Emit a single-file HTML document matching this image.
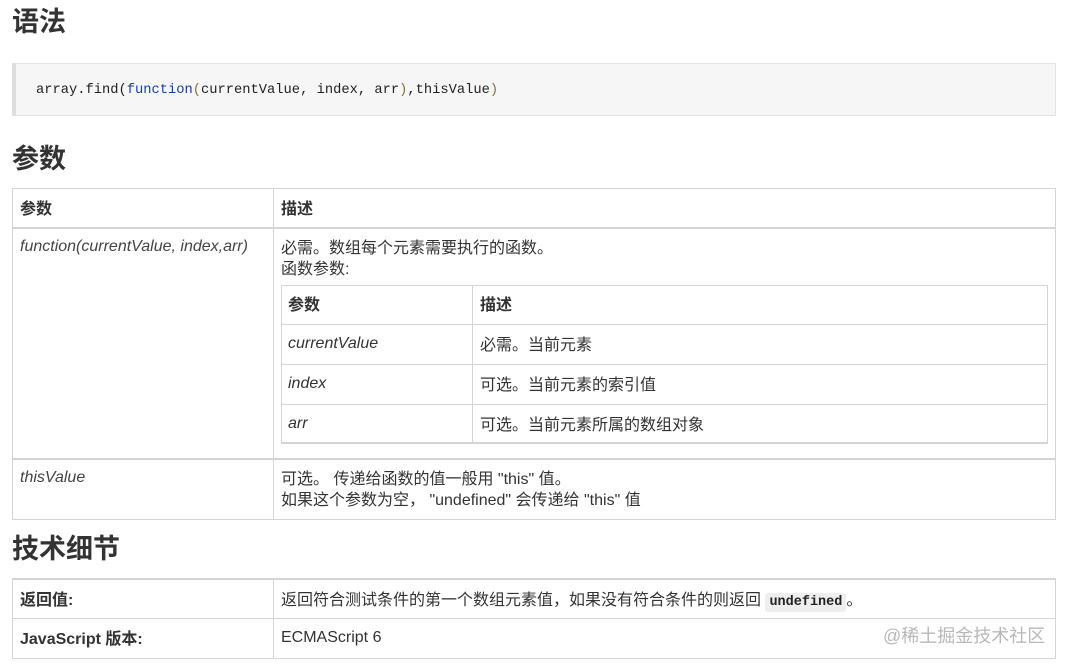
<!DOCTYPE html>
<html><head><meta charset="utf-8"><style>
*{margin:0;padding:0;box-sizing:border-box}
body{width:1067px;height:667px;background:#fff;position:relative;overflow:hidden;font-family:"Liberation Sans","Noto Sans CJK SC",sans-serif;color:#333;font-size:16px}
.a{position:absolute}
h2{position:absolute;left:12px;font-size:27px;font-weight:bold;color:#333;line-height:30px}
.b{position:absolute;border:1px solid #d4d4d4}
.hl{position:absolute;background:#d4d4d4}
.t{position:absolute;white-space:nowrap;line-height:21px}
i{font-style:italic}
b{font-weight:bold}
</style></head><body>
<h2 style="top:7px">语法</h2>
<div class="a" style="left:12px;top:63px;width:1044px;height:53px;background:#f6f6f6;border:1px solid #e4e4e4;border-left:4px solid #ddd"></div>
<div class="t" style="left:36px;top:80px;font-family:'Liberation Mono',monospace;font-size:13.75px;color:#222">array.find(<span style="color:#1a3fa0">function</span><span style="color:#8a6d3b">(</span>currentValue, index, arr<span style="color:#8a6d3b">)</span>,thisValue<span style="color:#8a6d3b">)</span></div>

<h2 style="top:144px">参数</h2>
<div class="b" style="left:12px;top:188px;width:1044px;height:332px"></div>
<div class="hl" style="left:273px;top:188px;width:1px;height:332px"></div>
<div class="hl" style="left:12px;top:227px;width:1044px;height:2px"></div>
<div class="hl" style="left:12px;top:458px;width:1044px;height:2px"></div>
<div class="t" style="left:20px;top:199px"><b>参数</b></div>
<div class="t" style="left:281px;top:199px"><b>描述</b></div>
<div class="t" style="left:20px;top:236px;color:#444"><i>function(currentValue, index,arr)</i></div>
<div class="t" style="left:281px;top:238px">必需。数组每个元素需要执行的函数。</div>
<div class="t" style="left:281px;top:259px">函数参数:</div>

<div class="b" style="left:281px;top:285px;width:767px;height:159px"></div>
<div class="hl" style="left:472px;top:285px;width:1px;height:159px"></div>
<div class="hl" style="left:281px;top:324px;width:767px;height:1px"></div>
<div class="hl" style="left:281px;top:364px;width:767px;height:1px"></div>
<div class="hl" style="left:281px;top:404px;width:767px;height:1px"></div>
<div class="hl" style="left:281px;top:442px;width:767px;height:2px"></div>
<div class="t" style="left:288px;top:295px"><b>参数</b></div>
<div class="t" style="left:480px;top:295px"><b>描述</b></div>
<div class="t" style="left:288px;top:333px"><i>currentValue</i></div>
<div class="t" style="left:480px;top:335px">必需。当前元素</div>
<div class="t" style="left:288px;top:373px"><i>index</i></div>
<div class="t" style="left:480px;top:375px">可选。当前元素的索引值</div>
<div class="t" style="left:288px;top:413px"><i>arr</i></div>
<div class="t" style="left:480px;top:415px">可选。当前元素所属的数组对象</div>

<div class="t" style="left:20px;top:467px;color:#444"><i>thisValue</i></div>
<div class="t" style="left:281px;top:469px">可选。 传递给函数的值一般用 "this" 值。</div>
<div class="t" style="left:281px;top:490px">如果这个参数为空， "undefined" 会传递给 "this" 值</div>

<h2 style="top:534px">技术细节</h2>
<div class="b" style="left:12px;top:578px;width:1044px;height:81px"></div>
<div class="hl" style="left:12px;top:578px;width:1044px;height:2px"></div>
<div class="hl" style="left:273px;top:578px;width:1px;height:81px"></div>
<div class="hl" style="left:12px;top:618px;width:1044px;height:1px"></div>
<div class="t" style="left:20px;top:590px"><b>返回值:</b></div>
<div class="t" style="left:281px;top:590px">返回符合测试条件的第一个数组元素值，如果没有符合条件的则返回 <span style="background:#eee;border-radius:3px;padding:2px 4px;font-family:'Liberation Mono',monospace;font-weight:bold;font-size:13.5px;color:#222">undefined</span>。</div>
<div class="t" style="left:20px;top:629px"><b>JavaScript 版本:</b></div>
<div class="t" style="left:281px;top:627px">ECMAScript 6</div>
<div class="t" style="left:883px;top:626px;color:#b8b8b8;font-size:18px">@稀土掘金技术社区</div>
</body></html>
